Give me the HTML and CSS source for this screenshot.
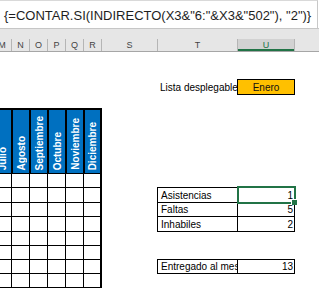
FILE: index.html
```html
<!DOCTYPE html>
<html lang="es">
<head>
<meta charset="utf-8">
<title>Hoja</title>
<link rel="stylesheet" href="styles.css">
</head>
<body>
<div class="formula-bar"><span class="formula">{=CONTAR.SI(INDIRECTO(X3&amp;"6:"&amp;X3&amp;"502"), "2")}</span></div>
<div class="band"></div>
<div class="col-headers">
  <span class="first">M</span><span>N</span><span>O</span><span>P</span><span>Q</span><span>R</span><span>S</span><span>T</span><span class="active">U</span><span></span>
</div>
<div class="sheet">
  <div class="months">
    <div class="month first"><span>Julio</span></div>
    <div class="month"><span>Agosto</span></div>
    <div class="month"><span>Septiembre</span></div>
    <div class="month"><span>Octubre</span></div>
    <div class="month"><span>Noviembre</span></div>
    <div class="month"><span>Diciembre</span></div>
    <div class="cell first"></div><div class="cell"></div><div class="cell"></div><div class="cell"></div><div class="cell"></div><div class="cell"></div>
    <div class="cell first"></div><div class="cell"></div><div class="cell"></div><div class="cell"></div><div class="cell"></div><div class="cell"></div>
    <div class="cell first"></div><div class="cell"></div><div class="cell"></div><div class="cell"></div><div class="cell"></div><div class="cell"></div>
    <div class="cell first"></div><div class="cell"></div><div class="cell"></div><div class="cell"></div><div class="cell"></div><div class="cell"></div>
    <div class="cell first"></div><div class="cell"></div><div class="cell"></div><div class="cell"></div><div class="cell"></div><div class="cell"></div>
    <div class="cell first"></div><div class="cell"></div><div class="cell"></div><div class="cell"></div><div class="cell"></div><div class="cell"></div>
    <div class="cell first"></div><div class="cell"></div><div class="cell"></div><div class="cell"></div><div class="cell"></div><div class="cell"></div>
    <div class="cell first"></div><div class="cell"></div><div class="cell"></div><div class="cell"></div><div class="cell"></div><div class="cell"></div>
    <div class="cell first"></div><div class="cell"></div><div class="cell"></div><div class="cell"></div><div class="cell"></div><div class="cell"></div>
  </div>

  <div class="list-label">Lista desplegable</div>
  <div class="dropdown">Enero</div>

  <div class="summary">
    <div class="label">Asistencias</div><div class="value selected">1<span class="selection"><i class="handle"></i></span></div>
    <div class="label">Faltas</div><div class="value">5</div>
    <div class="label">Inhabiles</div><div class="value">2</div>
  </div>

  <div class="summary delivered">
    <div class="label">Entregado al mes</div><div class="value">13</div>
  </div>
</div>
</body>
</html>
```

FILE: styles.css
```css
* {
  box-sizing: border-box;
  margin: 0;
  padding: 0;
}

html, body {
  width: 319px;
  height: 288px;
  overflow: hidden;
  background: #ffffff;
}

body {
  font-family: "Liberation Sans", Arial, sans-serif;
  font-size: 10px;
  color: #000000;
  --cols: 18px 18px 18px 18px 18px 18px 56px 80px 57px 1fr;
}

.formula-bar {
  height: 28px;
  width: 318px;
  border-top: 1px solid #d9d9d9;
  border-right: 1px solid #c8c8c8;
  display: flex;
  align-items: center;
  padding: 2px 0 0 4px;
  font-size: 13px;
  color: #1e1e1e;
  white-space: nowrap;
  overflow: hidden;
}

.band {
  height: 11px;
  background: #e6e6e6;
  border-top: 1px solid #c6c6c6;
}

.col-headers {
  display: grid;
  grid-template-columns: var(--cols);
  margin-left: -7px;
  height: 13px;
  background: #e6e6e6;
  border-bottom: 1px solid #a6a6a6;
}

.col-headers span {
  border-left: 1px solid #b5b5b5;
  text-align: center;
  font-size: 9px;
  line-height: 12px;
  color: #444444;
}

.col-headers span.first {
  border-left: none;
}

.col-headers span.active {
  background: #d2d2d2;
  color: #217346;
  box-shadow: inset 0 -2px 0 #217346;
}

.sheet {
  display: grid;
  grid-template-columns: var(--cols);
  grid-template-rows: 14px 14px 14px 14px 65px 14px 15px 14px 15px 14px 14px 14px 14px 14px;
  margin-left: -7px;
}

.months {
  grid-column: 1 / 7;
  grid-row: 5 / 15;
  margin-right: -1px;
  display: grid;
  grid-template-columns: 18px 18px 18px 18px 18px 17px;
  grid-template-rows: 65px 14px 15px 14px 15px 14px 14px 14px 14px 14px;
  border-right: 2px solid #000000;
}

.month {
  background: #0070c0;
  border-top: 2px solid #000000;
  border-left: 2px solid #000000;
  display: flex;
  align-items: flex-end;
  justify-content: center;
  padding-bottom: 3px;
  overflow: hidden;
}

.month.first {
  border-left: none;
}

.month span {
  writing-mode: vertical-rl;
  transform: rotate(180deg);
  color: #ffffff;
  font-weight: bold;
  font-size: 10px;
  line-height: 11px;
  white-space: nowrap;
}

.cell {
  border-top: 1px solid #000000;
  border-left: 1px solid #000000;
}

.cell.first {
  border-left: none;
}

.list-label {
  grid-column: 8;
  grid-row: 3;
  display: flex;
  align-items: center;
  padding-left: 3px;
  white-space: nowrap;
}

.dropdown {
  grid-column: 9;
  grid-row: 3;
  margin: -1px -1px -1px 0;
  border: 1px solid #000000;
  background: #ffc000;
  display: flex;
  align-items: center;
  justify-content: center;
  color: #111111;
}

.summary {
  grid-column: 8 / 10;
  grid-row: 7 / 10;
  margin-right: -1px;
  margin-bottom: -1px;
  display: grid;
  grid-template-columns: 80px 57px;
  grid-template-rows: 15px 14px 15px;
  border-right: 1px solid #000000;
  border-bottom: 1px solid #000000;
}

.summary.delivered {
  grid-row: 12 / 13;
  grid-template-rows: 14px;
}

.label,
.value {
  border-top: 1px solid #000000;
  border-left: 1px solid #000000;
  display: flex;
  align-items: center;
  white-space: nowrap;
  overflow: hidden;
}

.label {
  padding-left: 3px;
}

.value {
  justify-content: flex-end;
  padding-right: 1px;
}

.value.selected {
  position: relative;
  overflow: visible;
}

.selection {
  position: absolute;
  top: -2px;
  left: -1px;
  right: -2px;
  bottom: -2px;
  border: 2px solid #217346;
}

.handle {
  position: absolute;
  right: -3px;
  bottom: -3px;
  width: 5px;
  height: 5px;
  background: #217346;
  box-shadow: -1px -1px 0 #ffffff;
}
```
